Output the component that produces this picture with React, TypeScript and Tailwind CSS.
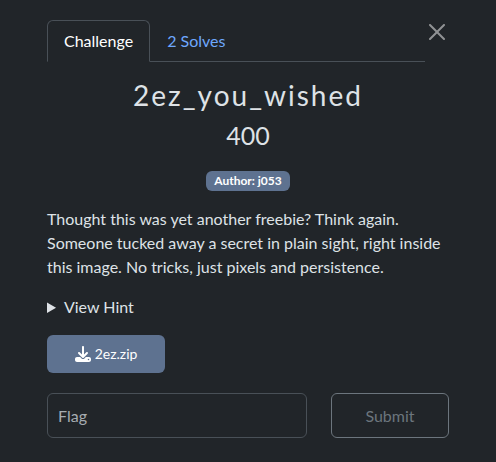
import { useState } from "react";
import { FaDownload } from "react-icons/fa6";

function CloseIcon() {
  return (
    <svg viewBox="0 0 16 16" className="size-4 fill-white" aria-hidden="true">
      <path d="M.293.293a1 1 0 0 1 1.414 0L8 6.586 14.293.293a1 1 0 1 1 1.414 1.414L9.414 8l6.293 6.293a1 1 0 0 1-1.414 1.414L8 9.414l-6.293 6.293a1 1 0 0 1-1.414-1.414L6.586 8 .293 1.707a1 1 0 0 1 0-1.414z" />
    </svg>
  );
}

export default function App() {
  const [flag, setFlag] = useState("");

  return (
    <main className="min-h-screen bg-[#212529] px-[47px] pt-5 pb-6 font-['Lato',sans-serif] text-base text-[#dee2e6]">
      <header className="flex items-start">
        <nav className="flex grow border-b border-[#495057]">
          <button
            type="button"
            className="-mb-px rounded-t-md border border-[#495057] border-b-[#212529] px-4 py-2 text-white"
          >
            Challenge
          </button>
          <button type="button" className="-mb-px border border-transparent px-4 py-2 text-[#6ea8fe]">
            2 Solves
          </button>
        </nav>
        <button type="button" aria-label="Close" className="p-1 opacity-50">
          <CloseIcon />
        </button>
      </header>

      <h2 className="mt-4 text-center text-[28px] leading-[34px] tracking-[2px]">2ez_you_wished</h2>
      <h3 className="mt-2 text-center text-[25px] leading-[30px]">400</h3>

      <div className="mt-[21px] flex justify-center">
        <span className="rounded-md bg-[#5e7290] px-2 text-xs leading-5 font-bold text-white">Author: j053</span>
      </div>

      <p className="mt-4">
        Thought this was yet another freebie? Think again. Someone tucked away a secret in plain sight, right inside
        this image. No tricks, just pixels and persistence.
      </p>

      <details className="mt-4">
        <summary>View Hint</summary>
      </details>

      <div className="mt-4 grid grid-cols-3 gap-x-6 gap-y-5">
        <button
          type="button"
          className="col-span-1 flex h-[38px] items-center justify-center gap-1 rounded-md bg-[#5e7290] text-sm text-white"
        >
          <FaDownload className="size-4" />
          2ez.zip
        </button>
        <input
          type="text"
          aria-label="Flag"
          placeholder="Flag"
          value={flag}
          onChange={(event) => setFlag(event.target.value)}
          className="col-span-2 col-start-1 h-[45px] min-w-0 rounded-md border border-[#495057] bg-transparent px-2.5 placeholder:text-[#a7acb1]"
        />
        <button type="button" className="h-[45px] rounded-md border border-[#6c757d] text-[#6c757d]">
          Submit
        </button>
      </div>
    </main>
  );
}
